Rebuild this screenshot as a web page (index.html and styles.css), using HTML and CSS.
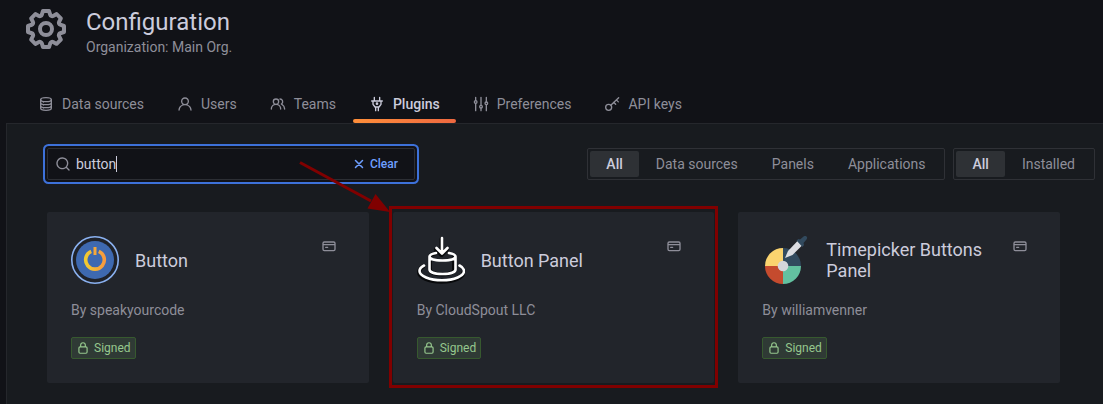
FILE: index.html
```html
<!DOCTYPE html>
<html lang="en">
<head>
<meta charset="utf-8">
<title>Configuration: Plugins</title>
<link rel="stylesheet" href="styles.css">
</head>
<body>
<svg class="symbols" aria-hidden="true">
  <symbol id="lock" viewBox="0 0 24 24"><path d="M17,9V7A5,5,0,0,0,7,7V9a3,3,0,0,0-3,3v7a3,3,0,0,0,3,3H17a3,3,0,0,0,3-3V12A3,3,0,0,0,17,9ZM9,7a3,3,0,0,1,6,0V9H9Zm9,12a1,1,0,0,1-1,1H7a1,1,0,0,1-1-1V12a1,1,0,0,1,1-1H17a1,1,0,0,1,1,1Z"/></symbol>
  <symbol id="card" viewBox="0 0 24 24"><path d="M7,15h3a1,1,0,0,0,0-2H7a1,1,0,0,0,0,2ZM19,5H5A3,3,0,0,0,2,8v9a3,3,0,0,0,3,3H19a3,3,0,0,0,3-3V8A3,3,0,0,0,19,5Zm1,12a1,1,0,0,1-1,1H5a1,1,0,0,1-1-1V11H20Zm0-8H4V8A1,1,0,0,1,5,7H19a1,1,0,0,1,1,1Z"/></symbol>
</svg>

<header class="page-header">
  <div class="page-heading">
    <svg class="page-icon" viewBox="0 0 24 24" aria-hidden="true"><path d="M21.32,9.55l-1.89-.63.89-1.78A1,1,0,0,0,20.13,6L18,3.87a1,1,0,0,0-1.15-.19l-1.78.89-.63-1.89A1,1,0,0,0,13.5,2h-3a1,1,0,0,0-.95.68L8.92,4.57,7.14,3.68A1,1,0,0,0,6,3.87L3.87,6a1,1,0,0,0-.19,1.15l.89,1.78-1.89.63A1,1,0,0,0,2,10.5v3a1,1,0,0,0,.68.95l1.89.63-.89,1.78A1,1,0,0,0,3.87,18L6,20.13a1,1,0,0,0,1.15.19l1.78-.89.63,1.89a1,1,0,0,0,.95.68h3a1,1,0,0,0,.95-.68l.63-1.89,1.78.89A1,1,0,0,0,18,20.13L20.13,18a1,1,0,0,0,.19-1.15l-.89-1.78,1.89-.63A1,1,0,0,0,22,13.5v-3A1,1,0,0,0,21.32,9.55ZM20,12.78l-1.2.4A2,2,0,0,0,17.64,16l.57,1.14-1.1,1.1L16,17.64a2,2,0,0,0-2.79,1.16l-.4,1.2H11.22l-.4-1.2A2,2,0,0,0,8,17.64l-1.14.57-1.1-1.1L6.36,16A2,2,0,0,0,5.2,13.18L4,12.78V11.22l1.2-.4A2,2,0,0,0,6.36,8L5.79,6.89l1.1-1.1L8,6.36A2,2,0,0,0,10.82,5.2l.4-1.2h1.56l.4,1.2A2,2,0,0,0,16,6.36l1.14-.57,1.1,1.1L17.64,8a2,2,0,0,0,1.16,2.79l1.2.4ZM12,8a4,4,0,1,0,4,4A4,4,0,0,0,12,8Zm0,6a2,2,0,1,1,2-2A2,2,0,0,1,12,14Z"/></svg>
    <div>
      <h1 class="page-title">Configuration</h1>
      <p class="page-subtitle">Organization: Main Org.</p>
    </div>
  </div>
  <nav class="tabs">
    <a class="tab" href="#datasources"><svg class="icon line" viewBox="0 0 24 24" aria-hidden="true"><ellipse cx="12" cy="5.500" rx="8" ry="3"/><path d="M4 5.500v13c0 1.700 3.500 3 8 3s8-1.300 8-3v-13M4 10c0 1.700 3.500 3 8 3s8-1.300 8-3M4 14.500c0 1.700 3.500 3 8 3s8-1.300 8-3M8 9h.1M8 13.500h.1M8 18h.1"/></svg>Data sources</a>
    <a class="tab" href="#users"><svg class="icon" viewBox="0 0 24 24" aria-hidden="true"><path d="M15.710,12.710a6,6,0,1,0-7.420,0,10,10,0,0,0-6.220,8.180,1,1,0,0,0,2,.22,8,8,0,0,1,15.900,0,1,1,0,0,0,1,.89h.11a1,1,0,0,0,.88-1.100A10,10,0,0,0,15.710,12.710ZM12,12a4,4,0,1,1,4-4A4,4,0,0,1,12,12Z"/></svg>Users</a>
    <a class="tab" href="#teams"><svg class="icon" viewBox="0 0 24 24" aria-hidden="true"><path d="M12.300,12.220A4.920,4.920,0,0,0,14,8.500a5,5,0,0,0-10,0,4.920,4.920,0,0,0,1.700,3.720A8,8,0,0,0,1,19.500a1,1,0,0,0,2,0,6,6,0,0,1,12,0,1,1,0,0,0,2,0A8,8,0,0,0,12.300,12.220ZM9,11.500a3,3,0,1,1,3-3A3,3,0,0,1,9,11.500Zm9.740.32A5,5,0,0,0,15,3.500a1,1,0,0,0,0,2,3,3,0,0,1,3,3,3,3,0,0,1-1.500,2.590,1,1,0,0,0-.5.84,1,1,0,0,0,.45.86l.39.26.13.07a7,7,0,0,1,4,6.380,1,1,0,0,0,2,0A9,9,0,0,0,18.740,11.820Z"/></svg>Teams</a>
    <a class="tab tab-active" href="#plugins" aria-current="page"><svg class="icon line" viewBox="0 0 24 24" aria-hidden="true"><path d="M8 2v5M16 2v5M4 7.500h16M6 7.500v5l3 4h6l3-4v-5M10 16.500v5.500M14 16.500v5.500"/><circle cx="12" cy="11.500" r="1"/></svg>Plugins</a>
    <a class="tab" href="#preferences"><svg class="icon line" viewBox="0 0 24 24" aria-hidden="true"><path d="M4 2v5M4 11v11M12 2v12M12 18v4M20 2v7M20 13v9"/><circle cx="4" cy="9" r="2"/><circle cx="12" cy="16" r="2"/><circle cx="20" cy="11" r="2"/></svg>Preferences</a>
    <a class="tab" href="#apikeys"><svg class="icon line" viewBox="0 0 24 24" aria-hidden="true"><circle cx="7" cy="17" r="4.500"/><path d="M10.200 13.800L22 2.500M14.500 9.500l3 3M18.500 5.800l3 3"/></svg>API keys</a>
  </nav>
</header>

<main class="page-body">
  <div class="toolbar">
    <div class="search">
      <svg class="icon" viewBox="0 0 24 24" aria-hidden="true"><path d="M21.710,20.290,18,16.610A9,9,0,1,0,16.610,18l3.680,3.680a1,1,0,0,0,1.420,0A1,1,0,0,0,21.710,20.290ZM11,18a7,7,0,1,1,7-7A7,7,0,0,1,11,18Z"/></svg>
      <div class="search-field">
        <input class="search-input" type="text" value="button" aria-label="Search plugins">
        <span class="caret"></span>
      </div>
      <button class="clear" type="button"><svg class="icon-small line" viewBox="0 0 24 24" aria-hidden="true"><path d="M6 6l12 12M18 6L6 18" stroke-width="2.600"/></svg>Clear</button>
    </div>
    <div class="filters">
      <div class="segmented" role="radiogroup" aria-label="Plugin type">
        <label class="segment"><input type="radio" name="type" checked>All</label>
        <label class="segment"><input type="radio" name="type">Data sources</label>
        <label class="segment"><input type="radio" name="type">Panels</label>
        <label class="segment"><input type="radio" name="type">Applications</label>
      </div>
      <div class="segmented" role="radiogroup" aria-label="Plugin state">
        <label class="segment"><input type="radio" name="state" checked>All</label>
        <label class="segment"><input type="radio" name="state">Installed</label>
      </div>
    </div>
  </div>

  <div class="plugins">
    <article class="plugin">
      <div class="plugin-head">
        <svg class="logo" viewBox="0 0 48 48" aria-hidden="true">
          <defs><linearGradient id="power"><stop offset="0" stop-color="#f2cb30"/><stop offset="1" stop-color="#f79a3e"/></linearGradient></defs>
          <circle cx="24" cy="24" r="23.200" fill="#1f2229" stroke="#8ab1f0" stroke-width="1.600"/>
          <circle cx="24" cy="24" r="19" fill="#3e69b0"/>
          <path d="M20.200 15.300A9.300 9.300 0 1 0 27.800 15.300" fill="none" stroke="url(#power)" stroke-width="3.600"/>
          <path d="M22.500 11h3v8h-3z" fill="#f5a83a"/>
        </svg>
        <h2 class="plugin-name">Button</h2>
        <svg class="icon plugin-type" aria-hidden="true"><use href="#card"/></svg>
      </div>
      <p class="plugin-author">By speakyourcode</p>
      <span class="badge"><svg class="icon-badge" aria-hidden="true"><use href="#lock"/></svg>Signed</span>
    </article>

    <article class="plugin plugin-marked">
      <div class="plugin-head">
        <svg class="logo" viewBox="0 0 48 48" aria-hidden="true">
          <g fill="none" stroke="#08090b" stroke-width="4" stroke-linecap="round" stroke-linejoin="round">
            <path d="M24.500 3v14M19 13.500l5.500 5.500 5.500-5.500M18.500 17.300c-3 .7-5.500 2-5.500 3.700v13c0 2.500 5 4.500 12 4.500s12-2 12-4.500V21M6 30.500c-3 2-4 3.500-4 5.500 0 5.500 10 9.800 22.500 9.800s22-4.300 22-9.800"/>
          </g>
          <g fill="none" stroke="#fff" stroke-width="2.600" stroke-linecap="round" stroke-linejoin="round">
            <path d="M25 2v15M19.500 12l5.500 5.500 5.500-5.500M19 17c-3.500.7-6.500 2-6.500 3.500 0 2.500 5 4 13 4s13-1.500 13-4c0-1.500-3-2.800-6.500-3.500M12.500 20.500v13c0 2.500 5 4.500 13 4.500s13-2 13-4.500v-13M7 29.500c-3 1.500-4.500 3.500-4.500 5.500 0 5 10 9.300 22.500 9.300s22-4.300 22-9.300c0-2-1.500-4-4.500-5.500"/>
          </g>
        </svg>
        <h2 class="plugin-name">Button Panel</h2>
        <svg class="icon plugin-type" aria-hidden="true"><use href="#card"/></svg>
      </div>
      <p class="plugin-author">By CloudSpout LLC</p>
      <span class="badge"><svg class="icon-badge" aria-hidden="true"><use href="#lock"/></svg>Signed</span>
      <svg class="marker-arrow" viewBox="0 0 92 52" aria-hidden="true"><path d="M1 1.500L72 40" stroke="#800000" stroke-width="3"/><path d="M91 51L68.500 47.500 76.500 33z" fill="#800000"/></svg>
    </article>

    <article class="plugin">
      <div class="plugin-head">
        <svg class="logo" viewBox="0 0 48 48" aria-hidden="true">
          <path d="M21 30V12a18 18 0 0 0-18 18z" fill="#fbd46f"/>
          <path d="M21 30V12a18 18 0 0 1 18 18z" fill="#324a5e"/>
          <path d="M21 30H3a18 18 0 0 0 18 18z" fill="#c54b2e"/>
          <path d="M21 30h18a18 18 0 0 1-18 18z" fill="#63c1a0"/>
          <circle cx="21" cy="30" r="5.300" fill="#d5d6db"/>
          <path d="M23 22l3-7 10-10.500 4.500 4.500-10 10z" fill="#dcdde2"/>
          <path d="M34.500 4.500l2-1.500 1.500.5L41 1c2.500-2.500 5.500 0 3.500 2.500L41.500 7l.5 2-1.500 2z" fill="#324a5e"/>
        </svg>
        <h2 class="plugin-name">Timepicker Buttons Panel</h2>
        <svg class="icon plugin-type" aria-hidden="true"><use href="#card"/></svg>
      </div>
      <p class="plugin-author">By williamvenner</p>
      <span class="badge"><svg class="icon-badge" aria-hidden="true"><use href="#lock"/></svg>Signed</span>
    </article>
  </div>
</main>
</body>
</html>
```
FILE: styles.css
```css
* {
  box-sizing: border-box;
}

body {
  margin: 0;
  min-height: 100vh;
  display: flex;
  flex-direction: column;
  background: #111217;
  color: #ccccdc;
  font: 14px/20px Roboto, "Liberation Sans", sans-serif;
}

h1, h2, p {
  margin: 0;
  font-weight: 400;
}

svg {
  flex: none;
  fill: currentColor;
}

.symbols {
  position: absolute;
  width: 0;
  height: 0;
}

.line {
  fill: none;
  stroke: currentColor;
  stroke-width: 2;
  stroke-linecap: round;
  stroke-linejoin: round;
}

.icon {
  width: 16px;
  height: 16px;
}

.icon-small {
  width: 14px;
  height: 14px;
}

.icon-badge {
  width: 14px;
  height: 14px;
}

.page-header {
  padding: 5px 22px 0;
}

.page-heading {
  display: flex;
  gap: 16px;
  color: #8e8e99;
}

.page-icon {
  width: 48px;
  height: 48px;
}

.page-title {
  padding-top: 3px;
  font-size: 24px;
  line-height: 28px;
  color: #ccccdc;
}

.page-subtitle {
  padding-top: 1px;
}

.tabs {
  display: flex;
  gap: 1px;
  padding-top: 32px;
}

.tab {
  display: flex;
  align-items: center;
  gap: 8px;
  height: 34px;
  padding: 0 16px;
  border-bottom: 4px solid transparent;
  color: #8e8e99;
  text-decoration: none;
}

.tab-active {
  position: relative;
  color: #ccccdc;
  font-weight: 500;
}

.tab-active::after {
  content: "";
  position: absolute;
  inset: auto 0 -4px;
  height: 4px;
  border-radius: 2px;
  background: linear-gradient(90deg, #ff8f3a, #ee6840);
}

.page-body {
  flex: 1;
  margin-left: 6px;
  padding: 24px 0 20px;
  border: solid #25272c;
  border-width: 1px 0 0 1px;
  background: #181b1f;
}

.toolbar {
  display: flex;
  justify-content: space-between;
  gap: 24px;
  padding: 0 8px 0 40px;
}

.search {
  display: flex;
  flex: 0 1 368px;
  align-items: center;
  gap: 5px;
  height: 32px;
  padding: 0 16px 0 7px;
  border: 1px solid #2c2e34;
  border-radius: 2px;
  background: #111217;
  box-shadow: 0 0 0 2px #111217, 0 0 0 4px #3d71d9;
  color: #8e8e99;
}

.search-field {
  display: flex;
  flex: 1;
  align-items: center;
  min-width: 0;
}

.search-input {
  field-sizing: content;
  min-width: 0;
  padding: 0;
  border: 0;
  outline: 0;
  background: none;
  color: #ccccdc;
  caret-color: transparent;
  font: inherit;
}

.caret {
  width: 1px;
  height: 16px;
  background: #ccccdc;
}

.clear {
  display: flex;
  align-items: center;
  gap: 4px;
  padding: 0;
  border: 0;
  background: none;
  color: #6e9fff;
  font: 500 12px/20px Roboto, "Liberation Sans", sans-serif;
}

.filters {
  display: flex;
  flex: none;
  gap: 8px;
}

.segmented {
  display: flex;
  height: 32px;
  padding: 2px;
  border: 1px solid #2f3136;
  border-radius: 2px;
}

.segment {
  position: relative;
  display: flex;
  align-items: center;
  padding: 0 17px;
  border-radius: 2px;
  color: #8e8e99;
}

.segment input {
  position: absolute;
  inset: 0;
  margin: 0;
  opacity: 0;
}

.segment:has(:checked) {
  padding: 0 16px;
  background: #2e3135;
  color: #ccccdc;
  font-weight: 500;
}

.plugins {
  display: grid;
  grid-template-columns: repeat(3, 1fr);
  gap: 24px;
  padding: 32px 43px 0 40px;
}

.plugin {
  position: relative;
  display: flex;
  flex-direction: column;
  align-items: flex-start;
  padding: 24px;
  border-radius: 2px;
  background: #22252b;
}

.plugin-marked::before {
  content: "";
  position: absolute;
  inset: -6px -4px -5px;
  border: 3px solid #800000;
}

.marker-arrow {
  position: absolute;
  top: -51px;
  left: -94px;
  width: 92px;
  height: 52px;
}

.plugin-head {
  display: flex;
  align-self: stretch;
  align-items: center;
  gap: 16px;
}

.logo {
  width: 48px;
  height: 48px;
}

.plugin-name {
  flex: 1;
  font-size: 18px;
  line-height: 21px;
}

.plugin-type {
  align-self: flex-start;
  margin: 2px 8px 0 0;
  color: #8e8e99;
}

.plugin-author {
  padding: 16px 0 17px;
  color: #8e8e99;
}

.badge {
  display: flex;
  align-items: center;
  gap: 4px;
  height: 22px;
  padding: 0 4px;
  border: 1px solid #37592f;
  border-radius: 2px;
  background: #2f3a35;
  color: #96c88e;
  font-size: 12px;
}
```
